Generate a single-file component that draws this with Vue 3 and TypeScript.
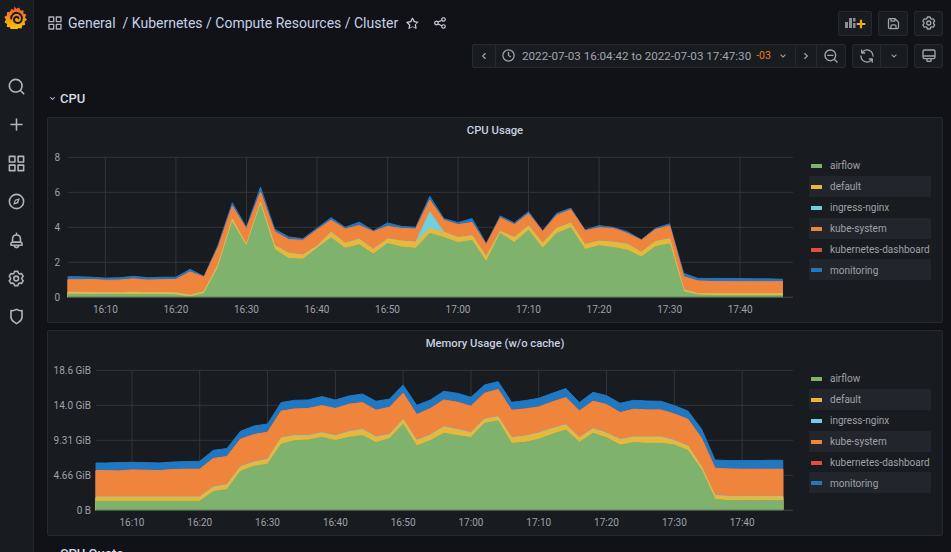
<template>
  <div class="page">
    <aside class="sidebar">
      <svg class="logo" viewBox="0 0 24 24" width="24" height="24">
        <defs>
          <linearGradient id="logoFill" x1="0" y1="0" x2="0" y2="1">
            <stop offset="0" stop-color="#f05a28" />
            <stop offset="1" stop-color="#fbca0a" />
          </linearGradient>
        </defs>
        <path
          fill="url(#logoFill)"
          d="M10.5 1.2l1.8 2.6 3-1.3 1 3 3.2-.2-.2 3.2 3 1.1-1.3 2.9 2 2.3-2.5 2 .7 3-3.1.7-.6 3.1-3.1-.6-1.8 2.6-2.6-1.8-2.9 1.3-1.2-2.9-3.1-.1.3-3.2-2.7-1.6 1.6-2.7-1.7-2.6 2.7-1.7-.1-3.1 3.1-.4 1.2-2.9 2.9 1.2z"
        />
        <path
          fill="none"
          stroke="#181b1f"
          stroke-width="2"
          stroke-linecap="round"
          d="M7.2 13.5a5.4 5.4 0 1 1 9.8 2.9 4.2 4.2 0 0 1-6.4.2 3 3 0 0 1 1.2-4.6 2.2 2.2 0 0 1 2.7 1.2"
        />
      </svg>
      <nav class="side-icons">
        <svg v-for="name in sideIcons" :key="name" viewBox="0 0 24 24" width="19" height="19">
          <path :d="icons[name]" />
        </svg>
      </nav>
    </aside>

    <main class="content">
      <header class="topbar">
        <div class="crumbs">
          <svg viewBox="0 0 24 24" width="16" height="16"><path :d="icons.apps" /></svg>
          <span class="crumb-text">General&nbsp; / Kubernetes / Compute Resources / Cluster</span>
          <svg class="crumb-action" viewBox="0 0 24 24" width="15" height="15"><path :d="icons.star" /></svg>
          <svg class="crumb-action share" viewBox="0 0 24 24" width="14" height="14"><path :d="icons.share" /></svg>
        </div>
        <div class="toolbars">
          <div class="toolbar">
            <button class="btn add-panel">
              <svg viewBox="0 0 22 16" width="22" height="16">
                <rect x="1" y="7" width="3" height="6" fill="#8e8e97" />
                <rect x="5" y="3" width="3" height="10" fill="#8e8e97" />
                <rect x="9" y="8" width="2.500" height="5" fill="#8e8e97" />
                <rect x="9" y="3" width="2.500" height="3.500" fill="#8e8e97" />
                <path d="M15.900 4.700h2.200v3.200h3.200v2.200h-3.200v3.200h-2.200v-3.200h-3.200V7.900h3.200z" fill="#f5a623" />
              </svg>
            </button>
            <button class="btn save"><svg viewBox="0 0 24 24" width="15" height="15"><path :d="icons.save" /></svg></button>
            <button class="btn square"><svg viewBox="0 0 24 24" width="16" height="16"><path :d="icons.cog" /></svg></button>
          </div>
          <div class="toolbar">
            <div class="group">
              <button class="btn seg prev"><svg viewBox="0 0 24 24" width="14" height="14"><path :d="icons.left" /></svg></button>
              <button class="btn seg range">
                <svg viewBox="0 0 24 24" width="15" height="15"><path :d="icons.clock" /></svg>
                <span class="range-text">2022-07-03 16:04:42 to 2022-07-03 17:47:30</span>
                <span class="tz">-03</span>
                <svg viewBox="0 0 24 24" width="12" height="12"><path :d="icons.down" /></svg>
              </button>
              <button class="btn seg next"><svg viewBox="0 0 24 24" width="14" height="14"><path :d="icons.right" /></svg></button>
              <button class="btn seg zoom"><svg viewBox="0 0 24 24" width="16" height="16"><path :d="icons.zoomOut" /></svg></button>
            </div>
            <div class="group">
              <button class="btn seg refresh"><svg viewBox="0 0 24 24" width="16" height="16"><path :d="icons.sync" /></svg></button>
              <button class="btn seg caret"><svg viewBox="0 0 24 24" width="12" height="12"><path :d="icons.down" /></svg></button>
            </div>
            <button class="btn square">
              <svg viewBox="0 0 24 24" width="16" height="16"><path :d="icons.monitor" /></svg>
            </button>
          </div>
        </div>
      </header>

      <div class="row-title">
        <svg viewBox="0 0 24 24" width="11" height="11"><path :d="icons.down" /></svg>
        <span>CPU</span>
      </div>

      <section v-for="chart in charts" :key="chart.title" class="panel">
        <h3 class="panel-title">{{ chart.title }}</h3>
        <div class="panel-body">
          <svg class="plot" width="761" height="165">
            <line
              v-for="tick in chart.yTicks"
              :key="tick.label"
              class="grid-line"
              :x1="chart.left"
              :x2="plotRight"
              :y1="tick.y"
              :y2="tick.y"
            />
            <line
              v-for="tick in chart.xTicks"
              :key="tick.label"
              class="grid-line"
              :x1="tick.x"
              :x2="tick.x"
              :y1="plotTop"
              :y2="plotBottom"
            />
            <path
              v-for="area in chart.areas"
              :key="area.name"
              :d="area.fill"
              :fill="area.color"
              :stroke="area.color"
              stroke-width="1"
              stroke-linejoin="round"
            />
            <line class="axis-line" :x1="chart.left" :x2="plotRight" :y1="plotBottom" :y2="plotBottom" />
            <text
              v-for="tick in chart.yTicks"
              :key="tick.label"
              class="axis-text"
              text-anchor="end"
              :x="chart.labelX"
              :y="tick.y + 4"
            >{{ tick.label }}</text>
            <text
              v-for="tick in chart.xTicks"
              :key="tick.label"
              class="axis-text"
              text-anchor="middle"
              :x="tick.x"
              :y="plotBottom + 16"
            >{{ tick.label }}</text>
          </svg>
          <ul class="legend">
            <li v-for="item in series" :key="item.name" class="legend-row">
              <i class="swatch" :style="{ background: item.color }"></i>
              <span class="legend-name">{{ item.name }}</span>
            </li>
          </ul>
        </div>
      </section>

      <div class="row-title next-row"><span>CPU Quota</span></div>
    </main>
  </div>
</template>

<script setup lang="ts">
const plotTop = 2.3
const plotBottom = 142.3
const plotRight = 745
const rangeMinutes = 102.8

const sideIcons = ['search', 'plus', 'apps', 'compass', 'bell', 'cog', 'shield'] as const

const icons = {
  search: 'M21.71,20.29,18,16.61A9,9,0,1,0,16.61,18l3.68,3.68a1,1,0,0,0,1.42,0A1,1,0,0,0,21.71,20.29ZM11,18a7,7,0,1,1,7-7A7,7,0,0,1,11,18Z',
  plus: 'M19,11H13V5a1,1,0,0,0-2,0v6H5a1,1,0,0,0,0,2h6v6a1,1,0,0,0,2,0V13h6a1,1,0,0,0,0-2Z',
  apps: 'M10,13H3a1,1,0,0,0-1,1v7a1,1,0,0,0,1,1h7a1,1,0,0,0,1-1V14A1,1,0,0,0,10,13ZM9,20H4V15H9ZM21,2H14a1,1,0,0,0-1,1v7a1,1,0,0,0,1,1h7a1,1,0,0,0,1-1V3A1,1,0,0,0,21,2ZM20,9H15V4h5Zm1,4H14a1,1,0,0,0-1,1v7a1,1,0,0,0,1,1h7a1,1,0,0,0,1-1V14A1,1,0,0,0,21,13Zm-1,7H15V15h5ZM10,2H3A1,1,0,0,0,2,3v7a1,1,0,0,0,1,1h7a1,1,0,0,0,1-1V3A1,1,0,0,0,10,2ZM9,9H4V4H9Z',
  compass: 'M12,2A10,10,0,1,0,22,12,10,10,0,0,0,12,2Zm0,18a8,8,0,1,1,8-8A8,8,0,0,1,12,20ZM16.2,7.8l-6.300,2.100-2.100,6.300,6.300-2.100ZM11,11l2.500-.9-.9,2.500-2.500.9Z',
  bell: 'M18,13.18V10a6,6,0,0,0-5-5.910V3a1,1,0,0,0-2,0V4.090A6,6,0,0,0,6,10v3.180A3,3,0,0,0,4,16v2a1,1,0,0,0,1,1H8.140a4,4,0,0,0,7.720,0H19a1,1,0,0,0,1-1V16A3,3,0,0,0,18,13.18ZM8,10a4,4,0,0,1,8,0v3H8Zm4,10a2,2,0,0,1-1.720-1h3.440A2,2,0,0,1,12,20Zm6-3H6V16a1,1,0,0,1,1-1H17a1,1,0,0,1,1,1Z',
  cog: 'M19.9,12.66a1,1,0,0,1,0-1.32L21.18,9.9a1,1,0,0,0,.12-1.17l-2-3.46a1,1,0,0,0-1.07-.48l-1.88.38a1,1,0,0,1-1.15-.66l-.61-1.83A1,1,0,0,0,13.64,2h-4a1,1,0,0,0-1,.68L8.08,4.51a1,1,0,0,1-1.15.66L5,4.79A1,1,0,0,0,4,5.27L2,8.73A1,1,0,0,0,2.1,9.9l1.27,1.44a1,1,0,0,1,0,1.32L2.1,14.1A1,1,0,0,0,2,15.27l2,3.46a1,1,0,0,0,1.07.48l1.88-.38a1,1,0,0,1,1.15.66l.61,1.83a1,1,0,0,0,1,.68h4a1,1,0,0,0,.95-.68l.61-1.83a1,1,0,0,1,1.15-.66l1.88.38a1,1,0,0,0,1.07-.48l2-3.46a1,1,0,0,0-.12-1.17ZM18.41,14l.8.9-1.28,2.22-1.18-.24a3,3,0,0,0-3.45,2L12.92,20H10.36L10,18.86a3,3,0,0,0-3.45-2l-1.18.24L4.07,14.89l.8-.9a3,3,0,0,0,0-4l-.8-.9L5.35,6.89l1.18.24a3,3,0,0,0,3.45-2L10.36,4h2.56l.38,1.14a3,3,0,0,0,3.45,2l1.18-.24,1.28,2.22-.8.9A3,3,0,0,0,18.41,14ZM11.64,8a4,4,0,1,0,4,4A4,4,0,0,0,11.64,8Zm0,6a2,2,0,1,1,2-2A2,2,0,0,1,11.64,14Z',
  shield: 'M19.63,3.65a1,1,0,0,0-.84-.2,8,8,0,0,1-6.22-1.27,1,1,0,0,0-1.14,0A8,8,0,0,1,5.21,3.45a1,1,0,0,0-.84.2A1,1,0,0,0,4,4.43v7.45a9,9,0,0,0,3.77,7.33l3.65,2.6a1,1,0,0,0,1.16,0l3.65-2.6A9,9,0,0,0,20,11.88V4.43A1,1,0,0,0,19.63,3.65ZM18,11.88a7,7,0,0,1-2.93,5.7L12,19.77l-3.07-2.19A7,7,0,0,1,6,11.88V5.58a10,10,0,0,0,6-1.39,10,10,0,0,0,6,1.39Z',
  star: 'M22,9.67A1,1,0,0,0,21.14,9l-5.69-.83L12.9,3a1,1,0,0,0-1.8,0L8.55,8.16,2.86,9a1,1,0,0,0-.81.68,1,1,0,0,0,.25,1l4.13,4-1,5.68A1,1,0,0,0,6.9,20.44L12,17.77l5.1,2.67a.93.93,0,0,0,.46.12,1,1,0,0,0,.59-.19,1,1,0,0,0,.4-1l-1-5.68,4.13-4A1,1,0,0,0,22,9.67Zm-6.15,4a1,1,0,0,0-.29.88l.72,4.2-3.76-2a1.06,1.06,0,0,0-.94,0l-3.76,2,.72-4.2a1,1,0,0,0-.29-.88l-3-3,4.21-.61a1,1,0,0,0,.76-.55L12,5.7l1.88,3.82a1,1,0,0,0,.76.55l4.21.61Z',
  share: 'M18,14a4,4,0,0,0-3.08,1.48l-5.1-2.35a3.64,3.64,0,0,0,0-2.26l5.1-2.35A4,4,0,1,0,14,6a4.17,4.17,0,0,0,.07.71L8.79,9.14a4,4,0,1,0,0,5.72l5.28,2.43A4.17,4.17,0,0,0,14,18a4,4,0,1,0,4-4ZM18,4a2,2,0,1,1-2,2A2,2,0,0,1,18,4ZM6,14a2,2,0,1,1,2-2A2,2,0,0,1,6,14Zm12,6a2,2,0,1,1,2-2A2,2,0,0,1,18,20Z',
  save: 'M20.71,9.29l-6-6a1,1,0,0,0-.32-.21A1.09,1.09,0,0,0,14,3H6A3,3,0,0,0,3,6V18a3,3,0,0,0,3,3H18a3,3,0,0,0,3-3V10A1,1,0,0,0,20.71,9.29ZM9,5h4V7H9Zm6,14H9V16a1,1,0,0,1,1-1h4a1,1,0,0,1,1,1Zm4-1a1,1,0,0,1-1,1H17V16a3,3,0,0,0-3-3H10a3,3,0,0,0-3,3v3H6a1,1,0,0,1-1-1V6A1,1,0,0,1,6,5H7V8A1,1,0,0,0,8,9h6a1,1,0,0,0,1-1V6.41l4,4Z',
  clock: 'M15.098,12.634,13,11.423V7a1,1,0,0,0-2,0v5a1,1,0,0,0,.5.866l3,1.731a1,1,0,1,0,1-1.732ZM12,2A10,10,0,1,0,22,12,10.011,10.011,0,0,0,12,2Zm0,18a8,8,0,1,1,8-8A8.009,8.009,0,0,1,12,20Z',
  left: 'M11.29,12l3.54-3.54a1,1,0,0,0,0-1.41,1,1,0,0,0-1.42,0L9.17,11.29a1,1,0,0,0,0,1.42L13.41,17a1,1,0,0,0,.71.29,1,1,0,0,0,.71-.29,1,1,0,0,0,0-1.41Z',
  right: 'M14.83,11.29,10.59,7.05a1,1,0,0,0-1.42,0,1,1,0,0,0,0,1.41L12.71,12,9.17,15.54a1,1,0,0,0,0,1.41,1,1,0,0,0,.71.29,1,1,0,0,0,.71-.29l4.24-4.24A1,1,0,0,0,14.83,11.29Z',
  down: 'M17,9.17a1,1,0,0,0-1.41,0L12,12.71,8.46,9.17a1,1,0,0,0-1.41,0,1,1,0,0,0,0,1.42l4.24,4.24a1,1,0,0,0,1.42,0L17,10.59A1,1,0,0,0,17,9.17Z',
  zoomOut: 'M21.71,20.29,18,16.61A9,9,0,1,0,16.61,18l3.68,3.68a1,1,0,0,0,1.42,0A1,1,0,0,0,21.71,20.29ZM11,18a7,7,0,1,1,7-7A7,7,0,0,1,11,18Zm4-8H7a1,1,0,0,0,0,2h8a1,1,0,0,0,0-2Z',
  sync: 'M19.91,15.51H15.38a1,1,0,0,0,0,2h2.4A8,8,0,0,1,4,12a1,1,0,0,0-2,0,10,10,0,0,0,16.88,7.23V21a1,1,0,0,0,2,0V16.5A1,1,0,0,0,19.91,15.51ZM12,2A10,10,0,0,0,5.12,4.77V3a1,1,0,0,0-2,0V7.5a1,1,0,0,0,1,1h4.5a1,1,0,0,0,0-2H6.22A8,8,0,0,1,20,12a1,1,0,0,0,2,0A10,10,0,0,0,12,2Z',
  monitor: 'M19,2H5A3,3,0,0,0,2,5V14a3,3,0,0,0,3,3H8v3a1,1,0,0,0,1,1h6a1,1,0,0,0,1-1V17h3a3,3,0,0,0,3-3V5A3,3,0,0,0,19,2ZM14,19H10V17h4Zm6-5a1,1,0,0,1-1,1H5a1,1,0,0,1-1-1V13H20Zm0-3H4V5A1,1,0,0,1,5,4H19a1,1,0,0,1,1,1Z',
}

const series = [
  { name: 'airflow', color: '#7eb26d' },
  { name: 'default', color: '#eab839' },
  { name: 'ingress-nginx', color: '#6ed0e0' },
  { name: 'kube-system', color: '#ef843c' },
  { name: 'kubernetes-dashboard', color: '#e24d42' },
  { name: 'monitoring', color: '#1f78c1' },
]

// stacked tops per 2 min sample, 16:06 to 17:46, rows of 10 min
const cpuTops = {
  airflow: [
    0.17, 0.16, 0.16, 0.17, 0.16,
    0.16, 0.16, 0.14, 0.02, 0.22,
    1.7, 4.27, 2.9, 5.25, 2.73,
    2.22, 2.18, 2.8, 3.4, 2.8,
    3.0, 2.47, 3.07, 2.87, 2.8,
    3.65, 3.42, 3.13, 3.25, 2.03,
    3.65, 3.13, 3.83, 2.8, 3.65,
    3.97, 2.73, 2.95, 2.85, 2.7,
    2.3, 2.9, 3.05, 0.32, 0.13,
    0.1, 0.1, 0.1, 0.1, 0.1,
    0.1,
  ],
  def: [
    0.27, 0.26, 0.24, 0.25, 0.28,
    0.25, 0.26, 0.24, 0.1, 0.32,
    1.85, 4.45, 3.0, 5.4, 2.95,
    2.5, 2.4, 2.9, 3.7, 3.07,
    3.3, 2.73, 3.32, 3.2, 3.13,
    3.93, 3.7, 3.4, 3.5, 2.3,
    3.75, 3.4, 4.07, 3.07, 3.93,
    4.22, 3.0, 3.2, 3.13, 3.02,
    2.56, 3.17, 3.32, 0.42, 0.2,
    0.2, 0.2, 0.2, 0.2, 0.2,
    0.2,
  ],
  ingress: [
    0.29, 0.28, 0.26, 0.27, 0.3,
    0.27, 0.28, 0.26, 0.12, 0.34,
    1.87, 4.47, 3.02, 5.42, 2.97,
    2.52, 2.42, 2.92, 3.72, 3.09,
    3.32, 2.75, 3.34, 3.22, 3.15,
    4.88, 3.72, 3.42, 3.52, 2.32,
    3.77, 3.42, 4.09, 3.09, 3.95,
    4.24, 3.02, 3.22, 3.15, 3.04,
    2.58, 3.19, 3.34, 0.44, 0.22,
    0.22, 0.22, 0.22, 0.22, 0.22,
    0.22,
  ],
  kube: [
    1.0, 1.02, 0.97, 0.98, 1.05,
    0.98, 1.0, 1.02, 1.45, 1.15,
    2.85, 5.2, 3.9, 6.0, 3.75,
    3.3, 3.25, 3.85, 4.4, 3.9,
    4.1, 3.75, 4.05, 3.93, 3.9,
    5.55, 4.4, 4.15, 4.27, 3.0,
    4.53, 4.15, 4.78, 3.75, 4.68,
    5.0, 3.8, 3.97, 3.93, 3.65,
    3.25, 3.87, 4.08, 1.18, 0.93,
    0.9, 0.89, 0.89, 0.89, 0.89,
    0.89,
  ],
  dash: [] as number[],
  monitoring: [
    1.18, 1.15, 1.1, 1.12, 1.2,
    1.12, 1.15, 1.15, 1.6, 1.2,
    3.0, 5.4, 4.0, 6.3, 3.9,
    3.45, 3.35, 3.95, 4.55, 4.0,
    4.3, 3.8, 4.25, 4.05, 4.0,
    5.77, 4.5, 4.27, 4.5, 3.07,
    4.65, 4.25, 4.9, 3.8, 4.8,
    5.1, 3.85, 4.1, 4.0, 3.75,
    3.3, 3.95, 4.2, 1.37, 1.08,
    1.08, 1.08, 1.07, 1.06, 1.06,
    1.03,
  ],
}
cpuTops.dash = cpuTops.kube.map((v) => v + 0.005)

// memory was read off as pixel rows at 3x, 541 is the zero line
const gib = (rows: number[]) => rows.map((y) => ((541 - y) * 4.66) / 105)

const memAirflow = gib([
  514, 514, 514, 514, 514,
  514, 514, 514, 485, 479,
  424, 409, 403, 343, 332,
  330, 322, 332, 322, 317,
  338, 326, 283, 348, 332,
  310, 317, 323, 280, 273,
  340, 337, 328, 313, 300,
  337, 310, 323, 345, 338,
  340, 340, 345, 362, 420,
  508, 512, 512, 512, 512,
  512,
])
const memDefault = gib([
  503, 503, 503, 503, 503,
  503, 503, 503, 473, 466,
  412, 398, 390, 326, 318,
  319, 310, 319, 307, 300,
  323, 315, 270, 333, 317,
  292, 300, 310, 269, 262,
  325, 320, 311, 297, 286,
  325, 298, 311, 330, 323,
  323, 323, 333, 350, 412,
  498, 501, 501, 501, 501,
  501,
])
const memKube = gib([
  422, 423, 420, 421, 422,
  419, 418, 418, 386, 380,
  328, 314, 307, 244, 237,
  236, 227, 236, 223, 218,
  241, 232, 190, 254, 236,
  210, 217, 229, 190, 179,
  241, 237, 231, 216, 203,
  243, 214, 224, 248, 238,
  240, 240, 252, 268, 325,
  415, 417, 418, 418, 418,
  418,
])
const memMonitoring = gib([
  399, 398, 397, 398, 399,
  396, 395, 394, 361, 356,
  304, 288, 282, 218, 211,
  210, 200, 210, 198, 192,
  214, 207, 165, 226, 210,
  184, 190, 202, 165, 155,
  217, 212, 205, 190, 176,
  218, 187, 197, 220, 211,
  213, 214, 227, 243, 297,
  390, 392, 392, 392, 391,
  391,
])

const memTops = {
  airflow: memAirflow,
  def: memDefault,
  ingress: memDefault.map((v) => v + 0.08),
  kube: memKube,
  dash: memKube.map((v) => v + 0.01),
  monitoring: memMonitoring,
}

type Tops = typeof cpuTops

const clock = ['16:10', '16:20', '16:30', '16:40', '16:50', '17:00', '17:10', '17:20', '17:30', '17:40']

const buildChart = (
  title: string,
  left: number,
  labelX: number,
  max: number,
  labels: string[],
  tops: Tops,
) => {
  const perMinute = (plotRight - left) / rangeMinutes
  const toY = (v: number) => plotBottom - (v / max) * (plotBottom - plotTop)
  const toX = (i: number) => left + (1.3 + i * 2) * perMinute

  const layers = [tops.airflow, tops.def, tops.ingress, tops.kube, tops.dash, tops.monitoring]
  const areas = series
    .map((s, idx) => {
      const line = layers[idx].map((v, i) => `L${toX(i).toFixed(1)} ${toY(v).toFixed(1)}`).join('')
      const endX = toX(layers[idx].length - 1).toFixed(1)
      return {
        name: s.name,
        color: s.color,
        fill: `M${left} ${plotBottom}L${left} ${toY(layers[idx][0]).toFixed(1)}${line}L${endX} ${plotBottom}Z`,
      }
    })
    .reverse()

  return {
    title,
    left,
    labelX,
    areas,
    yTicks: labels.map((label, i) => ({
      label,
      y: plotBottom - (i * (plotBottom - plotTop)) / (labels.length - 1),
    })),
    xTicks: clock.map((label, i) => ({
      label,
      x: left + (5.3 + i * 10) * perMinute,
    })),
  }
}

const charts = [
  buildChart('CPU Usage', 20, 12, 8, ['0', '2', '4', '6', '8'], cpuTops),
  buildChart('Memory Usage (w/o cache)', 48, 43, 18.64, ['0 B', '4.66 GiB', '9.31 GiB', '14.0 GiB', '18.6 GiB'], memTops),
]
</script>

<style>
html,
body {
  margin: 0;
  background: #111217;
  overflow: hidden;
}
</style>

<style scoped>
.page {
  display: flex;
  width: 951px;
  height: 552px;
  overflow: hidden;
  background: #111217;
  color: #ccccdc;
  font-family: Roboto, "Liberation Sans", sans-serif;
}

.sidebar {
  flex: 0 0 34px;
  display: flex;
  flex-direction: column;
  align-items: center;
  box-sizing: border-box;
  background: #181b1f;
  border-right: 1px solid #22252a;
  padding-top: 5px;
}

.logo {
  margin-left: -2px;
}

.side-icons {
  display: flex;
  flex-direction: column;
  align-items: center;
  gap: 19.400px;
  margin-top: 48px;
}

.side-icons svg {
  display: block;
  fill: #b2b3bd;
}

.content {
  flex: 1;
  min-width: 0;
  padding: 11px 8px 0 13px;
}

.topbar {
  display: flex;
  justify-content: space-between;
  align-items: flex-start;
}

.crumbs {
  display: flex;
  align-items: center;
  height: 24px;
  color: #c5d0e6;
}

.crumbs svg {
  flex: none;
  fill: #b2b3bd;
}

.crumb-text {
  margin-left: 5px;
  font-size: 14px;
  white-space: nowrap;
}

.crumb-action {
  margin-left: 7px;
  fill: #ccccdc !important;
}

.crumb-action.share {
  margin-left: 13px;
}

.toolbars {
  display: flex;
  flex-direction: column;
  align-items: flex-end;
  gap: 8px;
}

.toolbar {
  display: flex;
  gap: 6px;
}

.group {
  display: flex;
}

.btn {
  display: flex;
  align-items: center;
  justify-content: center;
  box-sizing: border-box;
  height: 24.500px;
  padding: 0;
  background: #181b1f;
  border: 1px solid #25282d;
  border-radius: 2px;
  color: #a3a4ad;
  font-family: inherit;
}

.btn svg {
  flex: none;
  fill: #a3a4ad;
}

.add-panel {
  width: 34px;
}

.save {
  width: 30px;
}

.square {
  width: 29px;
}

.seg {
  border-radius: 0;
  margin-left: -1px;
}

.group .seg:first-child {
  margin-left: 0;
  border-radius: 2px 0 0 2px;
}

.group .seg:last-child {
  border-radius: 0 2px 2px 0;
}

.prev {
  width: 24px;
}

.range {
  width: 301px;
  justify-content: flex-start;
  padding-left: 5px;
}

.range-text {
  margin-left: 6px;
  font-size: 11.650px;
  white-space: nowrap;
}

.tz {
  margin-left: 5px;
  font-size: 10.500px;
  color: #eb7b18;
}

.range svg:last-child {
  margin-left: 6px;
}

.next {
  width: 22px;
}

.zoom {
  width: 30px;
}

.refresh {
  width: 29px;
}

.caret {
  width: 28px;
}

.row-title {
  display: flex;
  align-items: center;
  gap: 2px;
  height: 20px;
  margin-top: 20px;
  font-size: 13px;
  font-weight: 500;
  color: #d3d8e6;
}

.row-title svg {
  fill: #ccccdc;
}

.next-row {
  margin: 7px 0 0 13px;
}

.panel {
  box-sizing: border-box;
  height: 206px;
  margin-top: 7px;
  background: #181b1f;
  border: 1px solid #25282d;
  border-radius: 2px;
}

.row-title + .panel {
  margin-top: 9px;
}

.panel-title {
  margin: 0;
  height: 37px;
  padding-top: 6px;
  box-sizing: border-box;
  text-align: center;
  font-size: 11.250px;
  font-weight: 500;
  color: #c7d0e0;
}

.panel-body {
  display: flex;
}

.plot {
  display: block;
  flex: none;
  overflow: visible;
}

.grid-line {
  stroke: #33353a;
  stroke-width: 1;
}

.axis-line {
  stroke: #3a3c41;
  stroke-width: 1;
}

.axis-text {
  fill: #a0a1a9;
  font-size: 10px;
}

.legend {
  list-style: none;
  margin: 0;
  padding: 0;
  width: 122px;
}

.legend-row {
  display: flex;
  align-items: center;
  height: 20.900px;
  font-size: 10px;
  color: #a0a1a9;
  white-space: nowrap;
}

.legend-row:nth-child(even) {
  background: #22252b;
}

.legend-name {
  margin-top: 1px;
}

.swatch {
  width: 11px;
  height: 4px;
  margin: 1px 8px 0 2px;
  flex: none;
}
</style>
